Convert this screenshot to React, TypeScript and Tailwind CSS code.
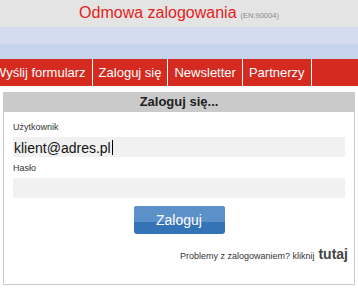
import React from "react"

const navItems = ["Wyślij formularz", "Zaloguj się", "Newsletter", "Partnerzy"]

export default function App() {
  return (
    <div className="w-[358px] h-[289px] overflow-hidden bg-white font-['Liberation_Sans',Arial,sans-serif]">
      {/* title band */}
      <div className="h-[27px] bg-[#e4e4e4] flex items-baseline justify-center leading-[25px]">
        <span className="text-[16px] text-[#e3221b]">Odmowa zalogowania</span>
        <span className="ml-[4px] text-[7.5px] text-[#8a8a8a]">(EN:90004)</span>
      </div>
      <div className="h-[17px] bg-[#d3dcee]" />
      <div className="h-[15px] bg-[#c7d3eb]" />

      {/* menu */}
      <div className="h-[27px] bg-[#d52a1f] overflow-hidden">
        <div className="flex h-full -ml-[12px]">
          {navItems.map((item) => (
            <div
              key={item}
              className="px-[6px] border-r border-white text-[13px] leading-[27px] text-white whitespace-nowrap"
            >
              {item}
            </div>
          ))}
        </div>
      </div>

      {/* login box */}
      <div className="mt-[6px] ml-[3px] w-[352px] border border-t-0 border-[#cacaca]">
        <div className="h-[20px] bg-[#cbcaca] text-center text-[13px] leading-[20px] font-bold text-[#1e1e1e]">
          Zaloguj się...
        </div>
        <div className="px-[9px] pt-[10px]">
          <div className="h-[11px] leading-[11px] text-[9px] text-[#333]">Użytkownik</div>
          <div className="mt-[4px] h-[20px] bg-[#f1f1f1] pl-[1px] pt-[2px] text-[14px] leading-[18px] text-[#111] flex items-start">
            <span>klient@adres.pl</span>
            <span className="ml-[1px] mt-[1px] w-[1px] h-[15px] bg-black" />
          </div>
          <div className="mt-[6px] h-[11px] leading-[11px] text-[9px] text-[#333]">Hasło</div>
          <div className="mt-[4px] h-[20px] bg-[#f1f1f1]" />
        </div>
        <div className="mt-[8px] mx-auto w-[91px] h-[28px] rounded-[3px] overflow-hidden relative bg-[#3474b6] flex items-center justify-center">
          <div className="absolute inset-x-0 top-0 h-[16px] bg-[#5c90c8]" />
          <span className="relative text-[14px] text-white">Zaloguj</span>
        </div>
        <div className="mt-[12px] pr-[6px] pb-[20px] flex justify-end items-baseline leading-[16px]">
          <span className="text-[9px] text-[#333]">Problemy z zalogowaniem? kliknij</span>
          <span className="ml-[4px] text-[14px] font-bold text-[#444]">tutaj</span>
        </div>
      </div>
    </div>
  )
}
